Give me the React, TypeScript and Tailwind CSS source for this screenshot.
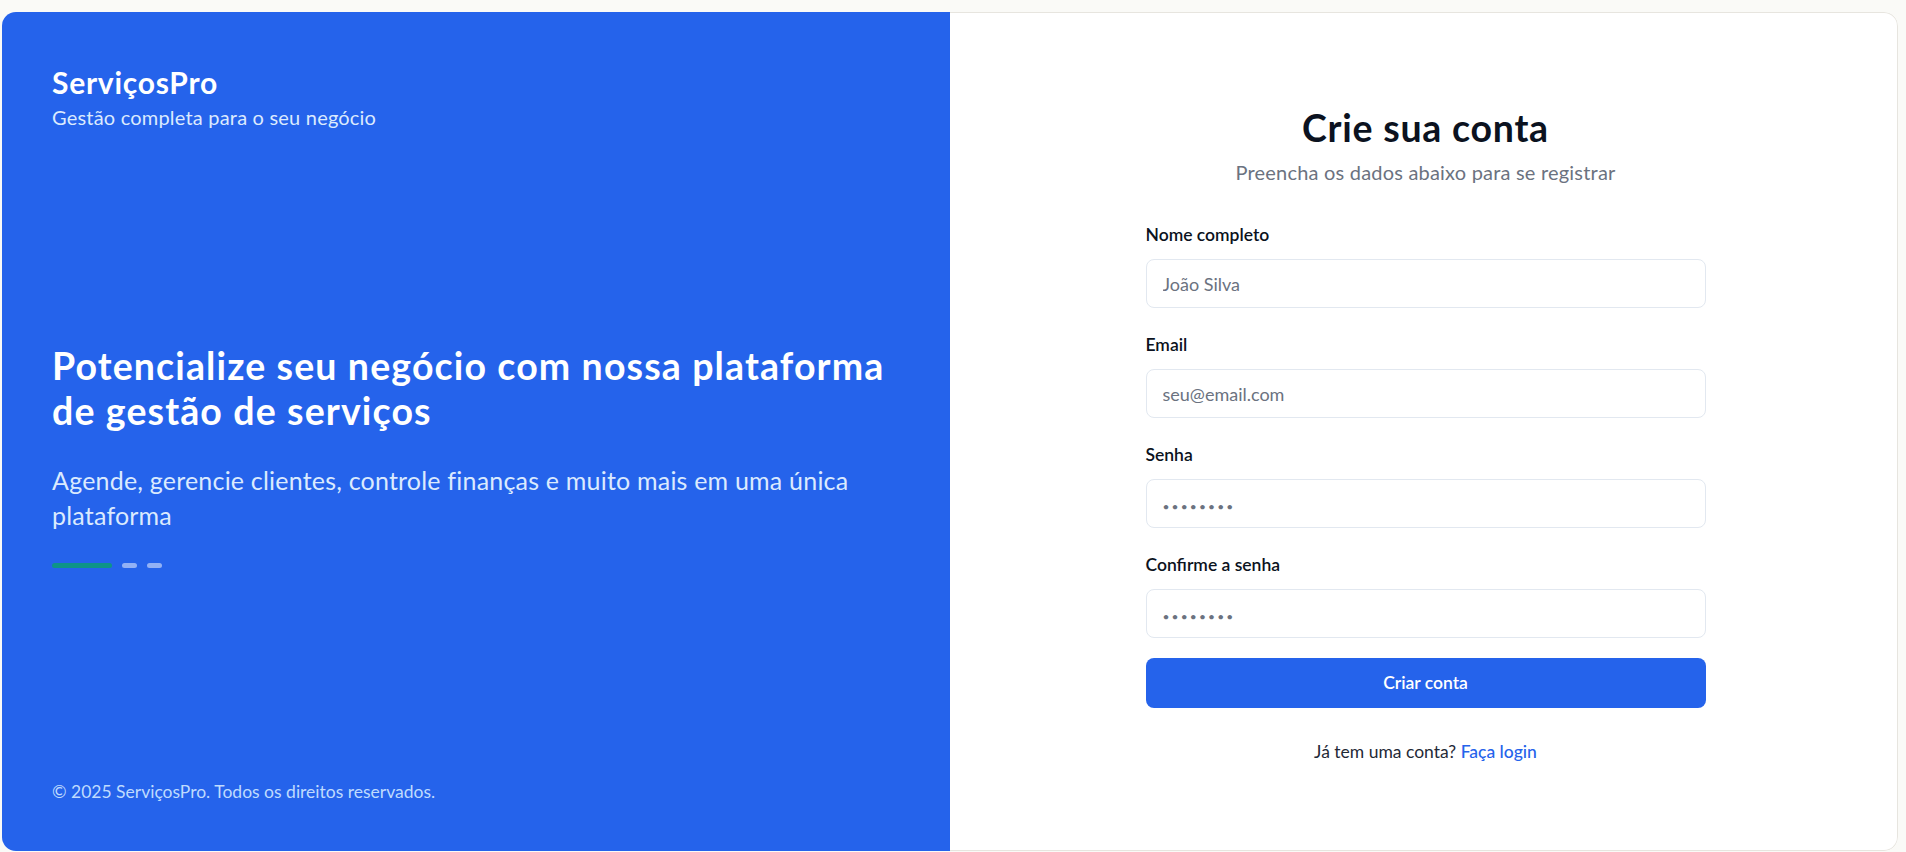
export default function App() {
  const fields = [
    { label: "Nome completo", type: "text", placeholder: "João Silva" },
    { label: "Email", type: "email", placeholder: "seu@email.com" },
    { label: "Senha", type: "password", placeholder: "••••••••" },
    { label: "Confirme a senha", type: "password", placeholder: "••••••••" },
  ];

  return (
    <div className="h-screen w-full bg-[#fafaf7] pt-[12px] pl-[2px] pr-[8px] pb-[1px] font-['Lato',sans-serif]">
      <div className="grid h-full grid-cols-2 overflow-hidden rounded-[14px] bg-white">
        {/* Left side */}
        <div className="flex flex-col justify-between bg-[#2563eb] px-[50px] pt-[50px] pb-[47px] text-white">
          <div>
            <h1 className="text-[30px] font-bold leading-[40px] tracking-[0.025em]">ServiçosPro</h1>
            <p className="text-[20px] leading-[30px] tracking-[0.01em] text-[#dbeafe]">
              Gestão completa para o seu negócio
            </p>
          </div>

          <div>
            <h2 className="text-[37.5px] font-bold leading-[45px] tracking-[0.03em]">
              Potencialize seu negócio com nossa plataforma de gestão de serviços
            </h2>
            <p className="mt-[30px] text-[25px] leading-[35px] tracking-[0.008em] text-[#dbeafe]">
              Agende, gerencie clientes, controle finanças e muito mais em uma única plataforma
            </p>
            <div className="mt-[30px] flex gap-[10px]">
              <span className="h-[5px] w-[60px] rounded-full bg-[#0d9488]" />
              <span className="h-[5px] w-[15px] rounded-full bg-white/50" />
              <span className="h-[5px] w-[15px] rounded-full bg-white/50" />
            </div>
          </div>

          <p className="text-[17.5px] leading-[25px] text-[#bfdbfe]">
            © 2025 ServiçosPro. Todos os direitos reservados.
          </p>
        </div>

        {/* Right side */}
        <div className="flex items-center justify-center rounded-r-[14px] border border-l-0 border-[#e7e5df] pt-[6px] pl-[4px]">
          <div className="w-[560px]">
            <div className="text-center">
              <h2 className="text-[37.5px] font-bold leading-[45px] tracking-[0.02em] text-[#0b1220]">
                Crie sua conta
              </h2>
              <p className="mt-[7px] text-[20px] leading-[30px] tracking-[0.01em] text-[#6b7280]">
                Preencha os dados abaixo para se registrar
              </p>
            </div>

            <form className="mt-[35px] flex flex-col gap-[24px]">
              {fields.map((field) => (
                <div key={field.label} className="flex flex-col gap-[12px]">
                  <label className="text-[17.5px] font-semibold leading-[25px] text-[#0b1220]">
                    {field.label}
                  </label>
                  <input
                    type={field.type}
                    placeholder={field.placeholder}
                    className={
                      field.type === "password"
                        ? "h-[49px] w-full rounded-[8px] border border-[#e2e8f0] bg-white px-[16px] text-[18px] tracking-[0.12em] text-gray-900 outline-none placeholder:text-[12px] placeholder:text-[#6b7280]"
                        : "h-[49px] w-full rounded-[8px] border border-[#e2e8f0] bg-white px-[16px] text-[18px] text-gray-900 outline-none placeholder:text-[#6b7280]"
                    }
                  />
                </div>
              ))}
              <button
                type="button"
                className="mt-[-4px] h-[50px] w-full rounded-[8px] bg-[#2563eb] text-[17.5px] font-semibold text-white"
              >
                Criar conta
              </button>
            </form>

            <p className="mt-[31px] text-center text-[17.5px] leading-[25px] text-[#1f2937]">
              Já tem uma conta?{" "}
              <a href="#" className="font-medium text-[#2563eb]">
                Faça login
              </a>
            </p>
          </div>
        </div>
      </div>
    </div>
  );
}
